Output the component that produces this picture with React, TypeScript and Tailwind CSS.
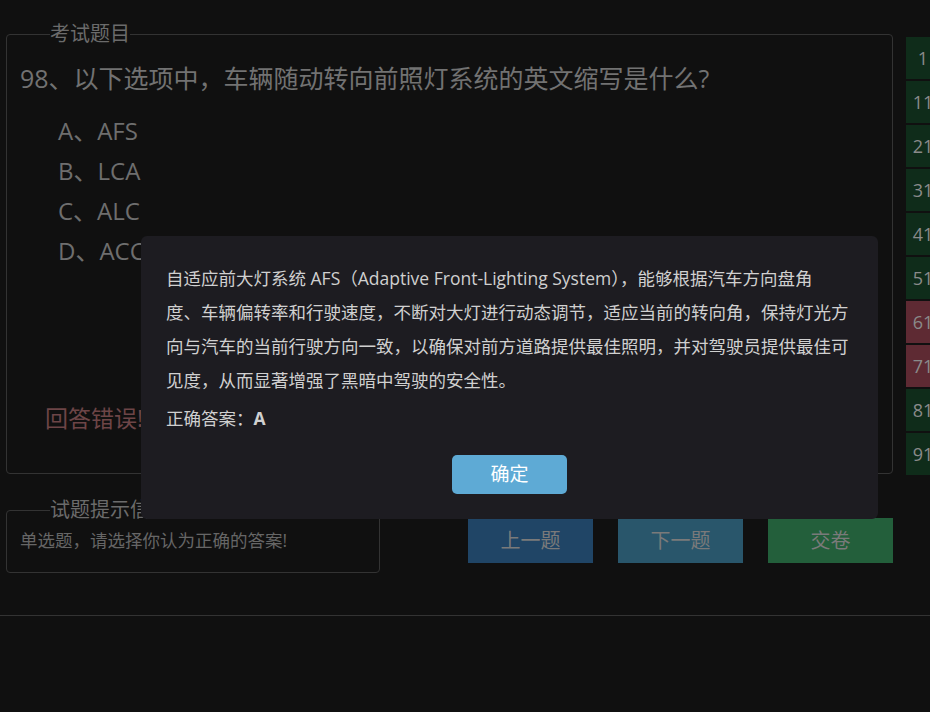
import React from "react"

const options = ["A、AFS", "B、LCA", "C、ALC", "D、ACC"]

// numbers that were answered wrong (shown red in the grid)
const wrongNumbers = [61, 71, 98]

export default function App() {
  const numbers = Array.from({ length: 100 }, (_, i) => i + 1)

  return (
    <div className="relative w-[930px] h-[712px] overflow-hidden bg-[#101010] font-['Open_Sans','Noto_Sans_CJK_SC',sans-serif]">
      <div className="flex pt-[22px] pl-[6px]">
        {/* Left side: question + hint + buttons */}
        <div className="w-[887px] shrink-0">
          <fieldset className="h-[452px] border border-[#333] rounded px-[13px]">
            <legend className="ml-[30px] text-[20px] leading-[24px] text-[#6b6b6b]">考试题目</legend>
            <div className="mt-[12px] text-[25px] leading-[40px] text-[#727272]">
              98、以下选项中，车辆随动转向前照灯系统的英文缩写是什么?
            </div>
            <div className="mt-[13px] pl-[38px]">
              {options.map((o) => (
                <div key={o} className="text-[24px] leading-[40px] text-[#6e6e6e]">
                  {o}
                </div>
              ))}
            </div>
            <div className="mt-[127px] pl-[25px] text-[23px] leading-[40px] text-[#6d4547]">回答错误!</div>
          </fieldset>

          <div className="flex justify-between mt-[24px]">
            <fieldset className="w-[374px] border border-[#333] rounded px-[13px] pb-[20px]">
              <legend className="ml-[30px] text-[20px] leading-[24px] text-[#6b6b6b]">试题提示信息</legend>
              <div className="mt-[6px] text-[17.5px] leading-[24px] text-[#666]">单选题，请选择你认为正确的答案!</div>
            </fieldset>
            <div className="flex gap-[25px] mt-[20px] h-[45px]">
              <button className="w-[125px] bg-[#204566] text-[20px] text-[#7a7a7a]">上一题</button>
              <button className="w-[125px] bg-[#29566b] text-[20px] text-[#7a7a7a]">下一题</button>
              <button className="w-[125px] bg-[#235f3b] text-[20px] text-[#7a7a7a]">交卷</button>
            </div>
          </div>
        </div>

        {/* Right side: question number grid (mostly off screen) */}
        <div className="ml-[13px] pt-[15px] shrink-0">
          <div className="grid grid-cols-[repeat(10,34px)] gap-[2px]">
            {numbers.map((n) => (
              <div
                key={n}
                className={`h-[42px] flex items-center justify-center text-[18px] text-[#8a8a8a] ${
                  wrongNumbers.includes(n) ? "bg-[#5e2a33]" : "bg-[#0f2c1a]"
                }`}
              >
                {n}
              </div>
            ))}
          </div>
        </div>
      </div>

      <div className="mt-[42px] border-t border-[#333]" />

      {/* Answer explanation dialog */}
      <div className="absolute left-[141px] top-[236px] w-[737px] rounded-md bg-[#1d1c21] px-[25px] pt-[25px] pb-[25px]">
        <p className="text-[17.5px] leading-[34px] text-[#d0d0d0]">
          自适应前大灯系统 AFS（Adaptive Front-Lighting System），能够根据汽车方向盘角
          <br />
          度、车辆偏转率和行驶速度，不断对大灯进行动态调节，适应当前的转向角，保持灯光方向与汽车的当前行驶方向一致，以确保对前方道路提供最佳照明，并对驾驶员提供最佳可见度，从而显著增强了黑暗中驾驶的安全性。
        </p>
        <p className="mt-[4px] text-[17.5px] leading-[34px] text-[#d0d0d0]">
          正确答案：<b className="font-bold">A</b>
        </p>
        <div className="flex justify-center mt-[20px]">
          <button className="w-[115px] h-[39px] rounded-[5px] bg-[#5eaad5] text-[19px] text-white">确定</button>
        </div>
      </div>
    </div>
  )
}
